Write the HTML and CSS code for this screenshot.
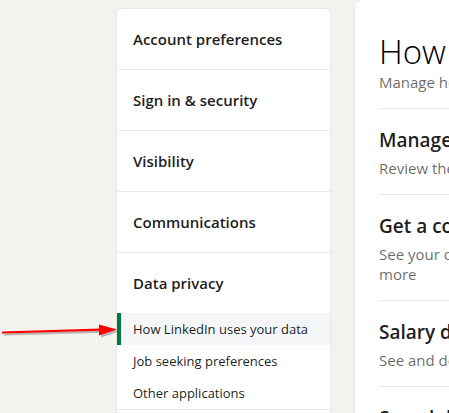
FILE: index.html
```html
<!DOCTYPE html>
<html lang="en">
<head>
<meta charset="UTF-8">
<title>Settings &amp; Privacy</title>
<link rel="stylesheet" href="styles.css">
</head>
<body>
<div class="page">
  <!-- Left nav -->
  <nav class="side-card">
    <div class="nav-item">Account preferences</div>
    <div class="nav-item">Sign in &amp; security</div>
    <div class="nav-item">Visibility</div>
    <div class="nav-item">Communications</div>
    <div class="nav-group">
      <div class="nav-head">Data privacy</div>
      <div class="sub-item active">How LinkedIn uses your data</div>
      <div class="sub-item">Job seeking preferences</div>
      <div class="sub-item">Other applications</div>
    </div>
    <div class="nav-item">Advertising data</div>
  </nav>

  <!-- Main content -->
  <main class="main-card">
    <div class="main-head">
      <h1>How LinkedIn uses your data</h1>
      <p>Manage how LinkedIn uses your data across the platform</p>
    </div>
    <div class="section">
      <h2>Manage your data and activity</h2>
      <p>Review the data that you've provided, and make changes if you'd like</p>
    </div>
    <div class="section">
      <h2>Get a copy of your data</h2>
      <p>See your options for accessing a copy of your account data, connections, and more</p>
    </div>
    <div class="section">
      <h2>Salary data on LinkedIn</h2>
      <p>See and delete your salary data</p>
    </div>
    <div class="section">
      <h2>Search history</h2>
      <p>Clear all previous searches performed on LinkedIn</p>
    </div>
  </main>
</div>

<!-- annotation arrow -->
<svg class="arrow" width="120" height="20" viewBox="0 0 120 20">
  <g transform="translate(2,2)" fill="#000" opacity="0.25">
    <path d="M2 11.5 L101 8.6 L101 10.8 L2 13.5 Z"/>
    <path d="M99 4.5 L117 9.5 L99 15.5 Z"/>
  </g>
  <path d="M2 11.5 L101 8.6 L101 10.8 L2 13.5 Z" fill="#f00"/>
  <path d="M99 4.5 L117 9.5 L99 15.5 Z" fill="#f00"/>
</svg>
</body>
</html>
```

FILE: styles.css
```css
:root {
  --bg:#f3f2ef;
  --card:#fff;
  --line:#e8e8e8;
  --text:rgba(0,0,0,0.9);
  --muted:rgba(0,0,0,0.6);
  --green:#057642;
}

html, body {
  margin:0; padding:0;
  height:100%;
  overflow:hidden;
  background:var(--bg);
  color:var(--text);
  font-family:"Open Sans", "Noto Sans", sans-serif;
}

.page {
  display:flex;
  align-items:flex-start;
  gap:25px;
  padding-left:117px;
}

/* Left nav card */
.side-card {
  flex:0 0 213px;
  margin-top:9px;
  background:var(--card);
  border-radius:4px;
  box-shadow:0 0 0 1px rgba(0,0,0,0.04);
}
.nav-item, .nav-head {
  height:60px;
  display:flex; align-items:center;
  padding:0 16px;
  font-size:15px; font-weight:600;
  border-bottom:1px solid var(--line);
}
.nav-group .nav-head {border-bottom:none;}
.nav-group {border-bottom:1px solid var(--line);}
.sub-item {
  height:32px;
  display:flex; align-items:center;
  padding:0 16px;
  font-size:13px;
  color:var(--text);
}
.sub-item.active {
  background:#f4f6f8;
  box-shadow:inset 4px 0 0 var(--green);
}

/* Main card */
.main-card {
  flex:0 0 620px;
  background:var(--card);
  border-radius:8px;
  padding:0 24px;
  box-shadow:0 0 0 1px rgba(0,0,0,0.04);
}
.main-head {padding:32px 0 16px; border-bottom:1px solid var(--line);}
.main-head h1 {margin:0; font-size:33px; line-height:40px; font-weight:300; color:#000;}
.main-head p {margin:0; font-size:15px; line-height:20px; color:var(--muted);}

.section {padding:19px 0 16px; border-bottom:1px solid var(--line);}
.section h2 {margin:0 0 6px; font-size:19px; line-height:24px; font-weight:600;}
.section p {margin:0; font-size:15px; line-height:20px; color:var(--muted); max-width:540px;}

/* Annotation */
.arrow {position:absolute; left:0; top:320px;}
```
